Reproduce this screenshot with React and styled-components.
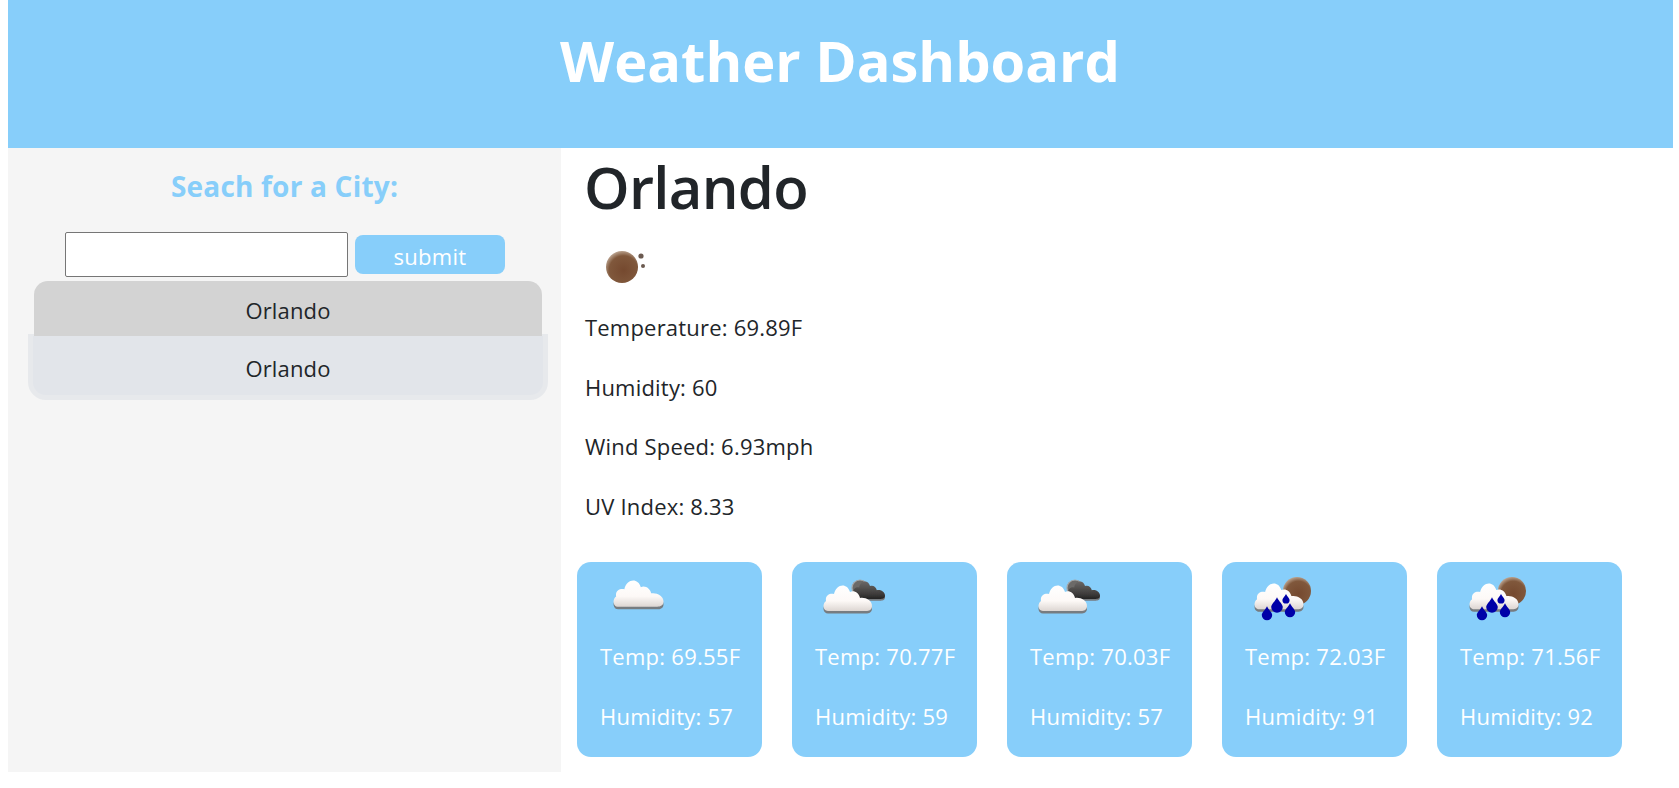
import styled, { createGlobalStyle } from "styled-components";

const GlobalStyle = createGlobalStyle`
  body {
    margin: 0 6px 0 8px;
    background: #fff;
    color: #212529;
    font-family: "Open Sans", "Noto Sans", sans-serif;
  }
`;

const Header = styled.header`
  height: 148px;
  box-sizing: border-box;
  padding-top: 21px;
  background: #87cefa;
  text-align: center;
`;

const Title = styled.h1`
  margin: 0;
  padding-right: 1px;
  font-size: 56px;
  line-height: 78px;
  font-weight: 700;
  color: #fff;
`;

const Columns = styled.div`
  display: grid;
  grid-template-columns: 553px 1fr;
  height: 624px;
`;

const Sidebar = styled.aside`
  background: #f5f5f5;
  padding-top: 19px;
  box-sizing: border-box;
`;

const SideTitle = styled.h2`
  margin: 0 0 27px;
  font-size: 28px;
  line-height: 38px;
  font-weight: 700;
  letter-spacing: 0.2px;
  text-align: center;
  color: #87cefa;
`;

const SearchRow = styled.form`
  display: flex;
  align-items: center;
  margin-left: 57px;
  gap: 7px;
`;

const CityInput = styled.input`
  width: 283px;
  height: 45px;
  box-sizing: border-box;
  background: #fff;
  border: 1px solid #767676;
  border-radius: 2px;
  padding: 0 4px;
`;

const SubmitButton = styled.button`
  width: 150px;
  height: 39px;
  padding: 3px 0 0;
  border: none;
  border-radius: 8px;
  background: #87cefa;
  color: #fff;
  font-family: inherit;
  font-size: 22px;
  letter-spacing: 0.3px;
`;

const CityList = styled.ul`
  list-style: none;
  margin: 4px 0 0 20px;
  padding: 0;
  width: 520px;
`;

const CityItem = styled.li`
  box-sizing: border-box;
  text-align: center;
  font-size: 22px;
  letter-spacing: 0.15px;
  ${({ $active }) =>
    $active
      ? `
    margin: 0 6px -2px;
    height: 55px;
    line-height: 58px;
    position: relative;
    z-index: 1;
    background: #d3d3d3;
    border-radius: 14px 14px 0 0;
  `
      : `
    height: 66px;
    line-height: 65px;
    background: #e2e5ea;
    border: 5px solid #e7e9ec;
    border-top-width: 2px;
    border-radius: 0 0 18px 18px;
  `}
`;

const Main = styled.main`
  padding-left: 16px;
`;

const CityName = styled.h1`
  margin: 0 0 0 7px;
  font-size: 58px;
  line-height: 78px;
  font-weight: 600;
  letter-spacing: -0.7px;
`;

const CurrentIcon = styled.svg`
  display: block;
  width: 50px;
  height: 50px;
  margin: 16px 0 0 24px;
`;

const Stats = styled.div`
  margin: 6px 0 0 8px;
`;

const Stat = styled.p`
  margin: 0;
  height: 59.6px;
  line-height: 59.6px;
  font-size: 22px;
  letter-spacing: 0.2px;
`;

const Forecast = styled.div`
  display: flex;
  gap: 30px;
  margin-top: 26px;
`;

const Card = styled.div`
  width: 185px;
  height: 195px;
  box-sizing: border-box;
  padding: 13px 0 0 23px;
  border-radius: 14px;
  background: #87cefa;
  color: #fff;
`;

const CardIcon = styled.svg`
  display: block;
  width: 80px;
  height: 51px;
`;

const CardLine = styled.p`
  margin: 0;
  height: 60px;
  line-height: 60px;
  font-size: 22px;
  letter-spacing: 0.25px;
  white-space: nowrap;
`;

const CLOUD =
  "M6 25C1 25 0 18 4 15C3 9 8 7 12 8C14 -2 25 -4 28 6C32 4 37 7 38 12C43 11 50 14 50 20C50 24 47 25 44 25Z";

function Cloud({ x, y, scale = 1, dark }) {
  return (
    <g transform={`translate(${x} ${y}) scale(${scale})`} filter="url(#soft)">
      <path d={CLOUD} transform="translate(0 2.5)" fill="#777c80" />
      <path d={CLOUD} fill={dark ? "url(#darkCloud)" : "url(#whiteCloud)"} />
    </g>
  );
}

function Drop({ x, y, r }) {
  return (
    <path
      d={`M${x} ${y - r * 1.7}C${x + r * 0.3} ${y - r} ${x + r} ${y - r * 0.5} ${x + r} ${y}A${r} ${r} 0 1 1 ${x - r} ${y}C${x - r} ${y - r * 0.5} ${x - r * 0.3} ${y - r} ${x} ${y - r * 1.7}Z`}
      fill="#0000a8"
    />
  );
}

function Defs() {
  return (
    <defs>
      <linearGradient id="whiteCloud" x1="0" y1="0" x2="0" y2="1">
        <stop offset="0" stopColor="#fff" />
        <stop offset="0.6" stopColor="#fdf9f7" />
        <stop offset="1" stopColor="#ddd6d2" />
      </linearGradient>
      <linearGradient id="darkCloud" x1="0" y1="0" x2="0" y2="1">
        <stop offset="0" stopColor="#6a6765" />
        <stop offset="0.7" stopColor="#3f3d3c" />
        <stop offset="1" stopColor="#232323" />
      </linearGradient>
      <radialGradient id="brown" cx="0.55" cy="0.6" r="0.6">
        <stop offset="0" stopColor="#75492f" />
        <stop offset="0.75" stopColor="#80583c" />
        <stop offset="1" stopColor="#b8a08c" />
      </radialGradient>
      <filter id="soft" x="-10%" y="-10%" width="120%" height="120%">
        <feGaussianBlur stdDeviation="0.55" />
      </filter>
    </defs>
  );
}

function WeatherIcon({ kind }) {
  return (
    <CardIcon viewBox="0 0 80 51">
      <Defs />
      {kind === "clouds" && <Cloud x={12} y={6} scale={1.03} />}
      {kind === "partly" && (
        <>
          <circle cx={45} cy={13} r={8} fill="#6c6a68" stroke="#a5a7a8" strokeWidth={1.2} />
          <Cloud x={36} y={7} scale={0.68} dark />
          <Cloud x={7} y={11} />
        </>
      )}
      {kind === "rain" && (
        <>
          <circle cx={52} cy={16} r={14} fill="url(#brown)" />
          <Cloud x={8} y={9} scale={1.01} />
          <Drop x={41} y={25} r={3.6} />
          <Drop x={32} y={32} r={5.8} />
          <Drop x={45} y={37} r={5.2} />
          <Drop x={22} y={40} r={5.2} />
        </>
      )}
    </CardIcon>
  );
}

const days = [
  { kind: "clouds", temp: "69.55", humidity: 57 },
  { kind: "partly", temp: "70.77", humidity: 59 },
  { kind: "partly", temp: "70.03", humidity: 57 },
  { kind: "rain", temp: "72.03", humidity: 91 },
  { kind: "rain", temp: "71.56", humidity: 92 },
];

export default function App() {
  return (
    <>
      <GlobalStyle />
      <Header>
        <Title>Weather Dashboard</Title>
      </Header>
      <Columns>
        <Sidebar>
          <SideTitle>Seach for a City:</SideTitle>
          <SearchRow onSubmit={(e) => e.preventDefault()}>
            <CityInput type="text" />
            <SubmitButton type="submit">submit</SubmitButton>
          </SearchRow>
          <CityList>
            <CityItem $active>Orlando</CityItem>
            <CityItem>Orlando</CityItem>
          </CityList>
        </Sidebar>
        <Main>
          <CityName>Orlando</CityName>
          <CurrentIcon viewBox="0 0 50 50">
            <Defs />
            <circle cx={21} cy={25} r={16} fill="url(#brown)" />
            <circle cx={40} cy={14} r={2.6} fill="#6b5a50" />
            <circle cx={42} cy={24} r={2} fill="#6b5a50" />
          </CurrentIcon>
          <Stats>
            <Stat>Temperature: 69.89F</Stat>
            <Stat>Humidity: 60</Stat>
            <Stat>Wind Speed: 6.93mph</Stat>
            <Stat>UV Index: 8.33</Stat>
          </Stats>
          <Forecast>
            {days.map((day, i) => (
              <Card key={i}>
                <WeatherIcon kind={day.kind} />
                <CardLine>Temp: {day.temp}F</CardLine>
                <CardLine>Humidity: {day.humidity}</CardLine>
              </Card>
            ))}
          </Forecast>
        </Main>
      </Columns>
    </>
  );
}
